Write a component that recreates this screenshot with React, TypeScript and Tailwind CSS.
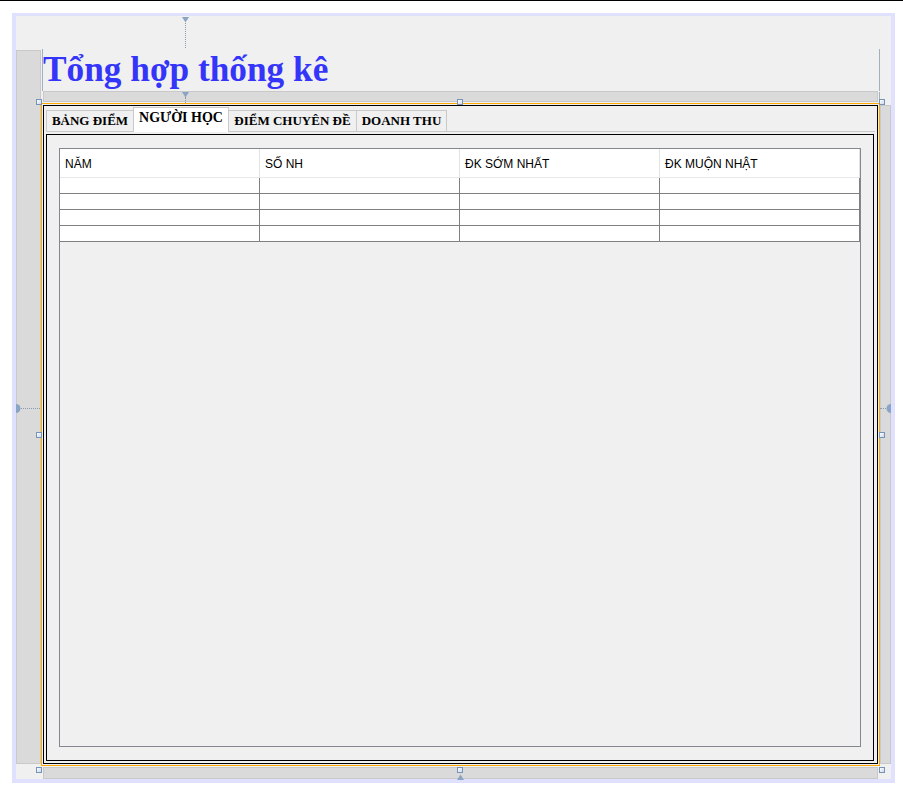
import React from "react";

const serif = { fontFamily: '"Liberation Serif", "Times New Roman", serif' } as React.CSSProperties;

function Handle({ cls }: { cls: string }) {
  return (
    <div
      className={
        "absolute w-[6px] h-[6px] border border-[#7893b4] bg-gradient-to-br from-white to-[#c9d9ec] " + cls
      }
    />
  );
}

export default function App() {
  const headers = ["NĂM", "SỐ NH", "ĐK SỚM NHẤT", "ĐK MUỘN NHẬT"];
  return (
    <div
      className="relative w-[903px] h-[792px] bg-white border-t border-black pt-[12px] pl-[12px] overflow-hidden"
      style={{ fontFamily: '"Liberation Sans", Arial, sans-serif' }}
    >
      <div className="w-[883px] h-[770px] border-[#e0e0ff] border-t-[3px] border-x-4 border-b-4 bg-[#f0f0f0] flex flex-col">
        <div className="h-[33px] shrink-0" />
        <div className="flex h-[730px]">
          {/* left gap */}
          <div className="w-[25px] shrink-0">
            <div className="mt-[1px] h-[714px] bg-[#dadada] border border-[#c9c9c9]" />
          </div>
          {/* middle */}
          <div className="w-[839px] shrink-0 flex flex-col">
            <div className="h-[42px] ml-[1px] border-l border-r border-[#9fb0c2] flex items-start">
              <span
                className="text-[35.3px] leading-[42px] font-bold text-[#3535fa] whitespace-nowrap"
                style={serif}
              >
                Tổng hợp thống kê
              </span>
            </div>
            <div className="ml-[2px] w-[835px] h-[11px] bg-[#dadada] border border-[#c9c9c9]" />
            <div className="mt-[1px] h-[663px] border border-[#ffa800]">
              <div className="ml-[1px] mt-[1px] w-[835px] h-[659px] border border-black">
                <div className="ml-[2px] w-[829px]">
                  <div className="mt-[1px] h-[24px] flex items-end" style={serif}>
                    <div className="w-[87px] h-[21px] border-l border-t border-[#cacaca] bg-[#f0f0f0] text-[13px] font-bold text-black flex justify-center pt-[2px] leading-[15px] whitespace-nowrap">
                      BẢNG ĐIỂM
                    </div>
                    <div className="relative z-10 w-[96px] h-[25px] -mb-[1px] border-x border-t border-[#cacaca] bg-white text-[14px] font-bold text-black flex justify-center pt-[2px] leading-[15px] whitespace-nowrap">
                      NGƯỜI HỌC
                    </div>
                    <div className="w-[128px] h-[21px] border-r border-t border-[#cacaca] bg-[#f0f0f0] text-[13px] font-bold text-black flex justify-center pt-[2px] leading-[15px] whitespace-nowrap">
                      ĐIỂM CHUYÊN ĐỀ
                    </div>
                    <div className="w-[90px] h-[21px] border-r border-t border-[#cacaca] bg-[#f0f0f0] text-[13px] font-bold text-black flex justify-center pt-[2px] leading-[15px] whitespace-nowrap">
                      DOANH THU
                    </div>
                  </div>
                  <div className="h-px bg-[#cacaca]" />
                  <div className="mt-[2px] w-[828px] h-[627px] border border-black">
                    <div className="ml-[12px] mt-[13px] w-[802px] h-[599px] border border-[#828790]">
                      <div className="flex h-[29px] border-b border-[#e8e8e8] bg-white">
                        {headers.map((h) => (
                          <div
                            key={h}
                            className="w-[200px] h-full border-r border-[#e3e3e3] pl-[5px] pt-[8px] text-[12px] leading-[14px] text-black whitespace-nowrap"
                          >
                            {h}
                          </div>
                        ))}
                      </div>
                      {[0, 1, 2, 3].map((r) => (
                        <div key={r} className="flex h-[16px] border-b border-[#808080]">
                          {[0, 1, 2, 3].map((c) => (
                            <div key={c} className="w-[200px] h-full bg-white border-r border-[#808080]" />
                          ))}
                        </div>
                      ))}
                    </div>
                  </div>
                </div>
              </div>
            </div>
            <div className="mt-[1px] ml-[2px] w-[835px] h-[12px] bg-[#dadada] border border-[#c9c9c9]" />
          </div>
          {/* right gap */}
          <div className="w-[11px] shrink-0">
            <div className="mt-[56px] h-[659px] bg-[#dadada] border border-[#c9c9c9]" />
          </div>
        </div>
      </div>

      {/* designer overlays */}
      <div className="absolute left-[879px] top-[91px] w-px h-[10px] bg-[#9fb0c2]" />
      <svg className="absolute left-[182px] top-[16px]" width="7" height="6" viewBox="0 0 7 6">
        <path d="M0 0 H7 L3.5 5.5 Z" fill="#8aa4c4" />
      </svg>
      <div className="absolute left-[185px] top-[22px] h-[25px] border-l border-dotted border-[#8c9cae]" />
      <svg className="absolute left-[182px] top-[91px]" width="7" height="6" viewBox="0 0 7 6">
        <path d="M0 0 H7 L3.5 5.5 Z" fill="#8aa4c4" />
      </svg>
      <div className="absolute left-[185px] top-[96px] h-[6px] border-l border-dotted border-[#8c9cae]" />
      <svg className="absolute left-[16px] top-[403px]" width="5" height="9" viewBox="0 0 5 9">
        <path d="M0 0 A4.5 4.5 0 0 1 0 9 Z" fill="#8aa4c4" />
      </svg>
      <div className="absolute left-[21px] top-[407px] w-[19px] border-t border-dotted border-[#8c9cae]" />
      <svg className="absolute left-[886px] top-[403px]" width="5" height="9" viewBox="0 0 5 9">
        <path d="M5 0 A4.5 4.5 0 0 0 5 9 Z" fill="#8aa4c4" />
      </svg>
      <div className="absolute left-[880px] top-[407px] w-[6px] border-t border-dotted border-[#8c9cae]" />
      <svg className="absolute left-[457px] top-[773px]" width="7" height="6" viewBox="0 0 7 6">
        <path d="M0 6 H7 L3.5 0.5 Z" fill="#8aa4c4" />
      </svg>

      <Handle cls="left-[36px] top-[98px]" />
      <Handle cls="left-[457px] top-[98px]" />
      <Handle cls="left-[879px] top-[98px]" />
      <Handle cls="left-[36px] top-[431px]" />
      <Handle cls="left-[879px] top-[431px]" />
      <Handle cls="left-[36px] top-[766px]" />
      <Handle cls="left-[457px] top-[766px]" />
      <Handle cls="left-[879px] top-[766px]" />
    </div>
  );
}
